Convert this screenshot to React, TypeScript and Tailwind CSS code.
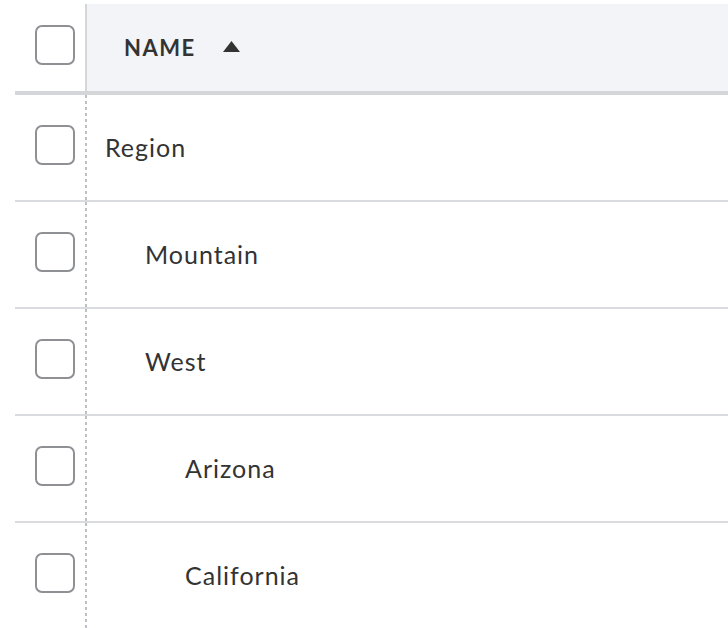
import React from 'react';

interface Row {
  name: string;
  level: number;
}

const rows: Row[] = [
  { name: 'Region', level: 0 },
  { name: 'Mountain', level: 1 },
  { name: 'West', level: 1 },
  { name: 'Arizona', level: 2 },
  { name: 'California', level: 2 },
];

const indent = ['pl-[18px]', 'pl-[58px]', 'pl-[98px]'];

const Checkbox: React.FC = () => (
  <span className="block w-10 h-10 mb-[5px] rounded-[7px] border-2 border-[#8e9094] bg-white" />
);

const App: React.FC = () => {
  return (
    <div className="w-[728px] h-[628px] overflow-hidden bg-white pt-1 pl-[15px] font-['Lato','Liberation_Sans',sans-serif] text-[#333]">
      <div className="flex h-[91px] border-b-4 border-[#d4d6da]">
        <div className="w-[70px] flex items-center pl-5 bg-white">
          <Checkbox />
        </div>
        <div className="w-0.5 bg-[#d4d6da]" />
        <div className="flex-1 flex items-center pl-[37px] bg-[#f3f4f8]">
          <span className="text-[22px] font-bold tracking-[1.5px]">NAME</span>
          <svg className="ml-[27px] mt-[-2px]" width="17" height="11" viewBox="0 0 17 11">
            <path d="M8.5 0 L17 11 L0 11 Z" fill="#333" />
          </svg>
        </div>
      </div>
      {rows.map((row) => (
        <div key={row.name} className="flex h-[107px] border-b-2 border-[#d9dbdf]">
          <div className="w-[70px] flex items-center pl-5">
            <Checkbox />
          </div>
          <div className="w-0.5 bg-[linear-gradient(#bcc0c5_50%,transparent_50%)] bg-[length:2px_6px] bg-repeat-y" />
          <div className={`flex-1 flex items-center text-[25px] tracking-[1px] ${indent[row.level]}`}>
            {row.name}
          </div>
        </div>
      ))}
    </div>
  );
};

export default App;
